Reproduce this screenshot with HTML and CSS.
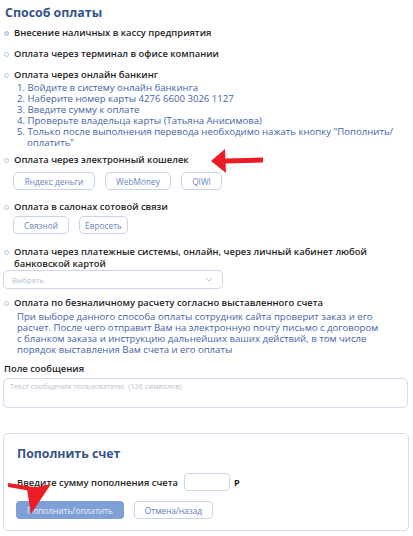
FILE: index.html
```html
<!DOCTYPE html>
<html lang="ru">
<head>
<meta charset="utf-8">
<link rel="stylesheet" href="styles.css">
</head>
<body>
<div class="page">
  <h1 class="title">Способ оплаты</h1>

  <div class="opt o1"><span class="radio checked"></span>Внесение наличных в кассу предприятия</div>
  <div class="opt o2"><span class="radio"></span>Оплата через терминал в офисе компании</div>
  <div class="opt o3"><span class="radio"></span>Оплата через онлайн банкинг</div>
  <ol class="steps">
    <li>Войдите в систему онлайн банкинга</li>
    <li>Наберите номер карты 4276 6600 3026 1127</li>
    <li>Введите сумму к оплате</li>
    <li>Проверьте владельца карты (Татьяна Анисимова)</li>
    <li>Только после выполнения перевода необходимо нажать кнопку "Пополнить/<br>оплатить"</li>
  </ol>

  <div class="opt o4"><span class="radio"></span>Оплата через электронный кошелек</div>
  <div class="chips c1">
    <span class="chip w-yandex">Яндекс деньги</span>
    <span class="chip w-webmoney">WebMoney</span>
    <span class="chip w-qiwi">QIWI</span>
  </div>

  <div class="opt o5"><span class="radio"></span>Оплата в салонах сотовой связи</div>
  <div class="chips c2">
    <span class="chip w-svyaznoy">Связной</span>
    <span class="chip w-euroset">Евросеть</span>
  </div>

  <div class="opt o6"><span class="radio"></span><span>Оплата через платежные системы, онлайн, через личный кабинет любой<br>банковской картой</span></div>
  <div class="select">
    <span>Выбрать</span>
    <svg class="chev" width="8" height="5" viewBox="0 0 8 5"><path d="M1 1l3 3 3-3" fill="none" stroke="#b9c4d6" stroke-width="1"/></svg>
  </div>

  <div class="opt o7"><span class="radio"></span>Оплата по безналичному расчету согласно выставленного счета</div>
  <p class="note">При выборе данного способа оплаты сотрудник сайта проверит заказ и его<br>расчет. После чего отправит Вам на электронную почту письмо с договором<br>с бланком заказа и инструкцию дальнейших ваших действий, в том числе<br>порядок выставления Вам счета и его оплаты</p>

  <div class="label">Поле сообщения</div>
  <div class="textarea">Текст сообщения пользователю&nbsp; (136 символов)</div>

  <div class="card">
    <h2 class="card-title">Пополнить счет</h2>
    <div class="sum-row">
      <span class="sum-label">Введите сумму пополнения счета</span>
      <span class="sum-input"></span>
      <span class="rub">Р</span>
    </div>
    <div class="actions">
      <span class="btn primary">Пополнить/оплатить</span>
      <span class="btn secondary">Отмена/назад</span>
    </div>
  </div>

  <svg class="arrow arrow-1" width="60" height="26" viewBox="0 0 60 26">
    <path d="M14 10.5 L52 9.5 L52 14.5 L14 15.5 Z" fill="#ec1c24"/>
    <path d="M0 13 L14 1 L15 25 Z" fill="#ec1c24"/>
  </svg>
  <svg class="arrow arrow-2" width="50" height="40" viewBox="0 0 50 40">
    <path d="M2 6 L34 11 L34 15.5 L2 10 Z" fill="#ec1c24"/>
    <path d="M45 7 L21 12 L25 37 Z" fill="#ec1c24"/>
  </svg>
</div>
</body>
</html>
```

FILE: styles.css
```css
* { box-sizing: border-box; }
html, body { margin: 0; padding: 0; background: #fff; }
body {
  font-family: "Open Sans", "Noto Sans", sans-serif;
  color: #222;
  width: 413px;
  height: 536px;
  overflow: hidden;
}
.page {
  position: relative;
  padding: 3px 5px 0 4px;
}
.title {
  margin: 0;
  font-size: 12.4px;
  line-height: 20px;
  font-weight: 700;
  color: #34538a;
  padding-left: 1px;
}
.opt {
  display: flex;
  align-items: flex-start;
  font-size: 9.4px;
  font-weight: 600;
  line-height: 14px;
  color: #1f1f1f;
  margin-top: 7px;
}
.radio {
  flex: none;
  width: 5px;
  height: 5px;
  border: 1px solid #b8c6dc;
  border-radius: 50%;
  margin: 4.5px 5px 0 0;
}
.radio.checked { background: #dfe7f4; border-color: #a9bcdc; }
.o1 { margin-top: 3px; }
.o4 { margin-top: 5px; }
.o5 { margin-top: 10px; }
.o6 { margin-top: 12px; line-height: 12px; }
.o6 .radio { margin-top: 3.5px; }
.o7 { margin-top: 7px; }

.steps {
  margin: 0;
  padding: 0 0 0 13px;
  list-style: none;
  counter-reset: step;
  font-size: 9.6px;
  line-height: 11px;
  font-weight: 500;
  color: #4565a6;
}
.steps li {
  counter-increment: step;
  padding-left: 10px;
  text-indent: -10px;
}
.steps li::before { content: counter(step) ". "; }

.chips {
  display: flex;
  gap: 10px;
  padding-left: 9px;
}
.c1 { margin-top: 5px; }
.c2 { margin-top: 2px; }
.chip {
  height: 18px;
  border: 1px solid #c9d4e6;
  border-radius: 5px;
  display: flex;
  align-items: center;
  justify-content: center;
  font-size: 8.3px;
  font-weight: 500;
  color: #6a86bd;
}
.w-yandex { width: 82px; }
.w-webmoney { width: 66px; }
.w-qiwi { width: 41px; }
.w-svyaznoy { width: 56px; }
.w-euroset { width: 49px; }

.select {
  width: 220px;
  height: 19px;
  margin-left: -1px;
  border: 1px solid #cdd7e7;
  border-radius: 5px;
  display: flex;
  align-items: center;
  justify-content: space-between;
  padding: 0 9px 0 8px;
  font-size: 7.5px;
  color: #b3bfd3;
}
.note {
  margin: 1px 0 0 0;
  padding-left: 13px;
  font-size: 9.6px;
  line-height: 11px;
  font-weight: 500;
  color: #4565a6;
  white-space: nowrap;
}
.label {
  margin-top: 7px;
  font-size: 9.4px;
  line-height: 14px;
  font-weight: 600;
  color: #1f1f1f;
}
.textarea {
  margin-top: 2px;
  margin-left: -1px;
  width: 405px;
  height: 30px;
  border: 1px solid #d3dcea;
  border-radius: 5px;
  padding: 2px 6px;
  font-size: 7.3px;
  line-height: 10px;
  color: #b9c2d2;
}
.card {
  margin-top: 25px;
  margin-left: -1px;
  width: 406px;
  height: 98px;
  border: 1px solid #d3dcea;
  border-radius: 5px;
  padding: 11px 12px 0 12px;
}
.card-title {
  margin: 0;
  font-size: 12.3px;
  line-height: 18px;
  font-weight: 700;
  color: #34538a;
  padding-left: 1px;
}
.sum-row {
  margin-top: 10px;
  display: flex;
  align-items: center;
  height: 18px;
  padding-left: 1px;
}
.sum-label {
  font-size: 9.4px;
  font-weight: 600;
  color: #1f1f1f;
}
.sum-input {
  margin-left: 6px;
  width: 46px;
  height: 18px;
  border: 1px solid #cdd7e7;
  border-radius: 4px;
}
.rub {
  margin-left: 4px;
  font-size: 9px;
  font-weight: 700;
}
.actions {
  margin-top: 10px;
  display: flex;
  gap: 10px;
}
.btn {
  height: 18px;
  border-radius: 4px;
  display: flex;
  align-items: center;
  justify-content: center;
  font-size: 8.3px;
  font-weight: 500;
}
.primary {
  width: 108px;
  background: #7f9fd8;
  color: #e9effb;
}
.secondary {
  width: 79px;
  border: 1px solid #c9d4e6;
  color: #5d7ab5;
}
.arrow { position: absolute; }
.arrow-1 { left: 211px; top: 148px; }
.arrow-2 { left: 6px; top: 477px; }
```
